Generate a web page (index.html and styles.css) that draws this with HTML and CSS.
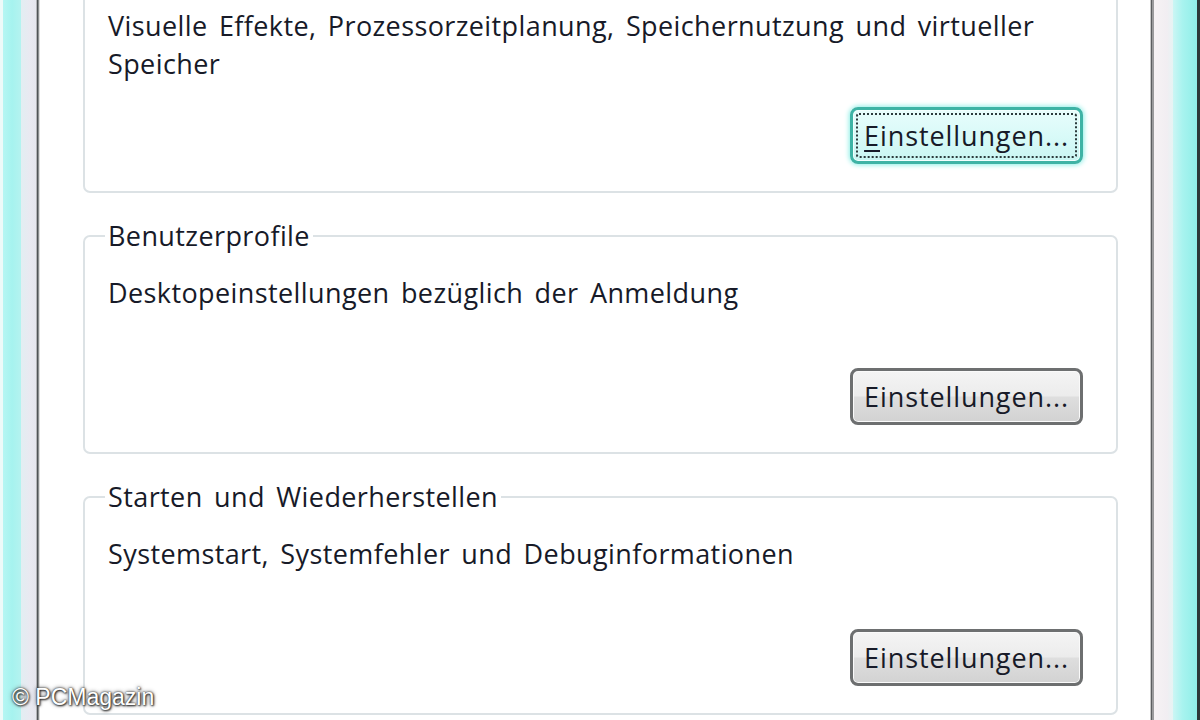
FILE: index.html
```html
<!DOCTYPE html>
<html lang="de">
<head>
<meta charset="utf-8">
<title>Systemeigenschaften – Erweitert</title>
<link rel="stylesheet" href="styles.css">
</head>
<body>
<div class="screen">
  <div class="frame frame-left">
    <span class="edge"></span>
    <span class="glass"></span>
    <span class="pale"></span>
    <span class="line"></span>
  </div>

  <main class="panel">
    <fieldset class="group group-first">
      <p class="desc">Visuelle Effekte, Prozessorzeitplanung, Speichernutzung und virtueller Speicher</p>
      <div class="actions">
        <button class="btn is-focused" type="button"><span class="label"><u>E</u>instellungen...</span></button>
      </div>
    </fieldset>

    <fieldset class="group">
      <legend>Benutzerprofile</legend>
      <p class="desc">Desktopeinstellungen bezüglich der Anmeldung</p>
      <div class="actions">
        <button class="btn" type="button"><span class="label">Einstellungen...</span></button>
      </div>
    </fieldset>

    <fieldset class="group">
      <legend>Starten und Wiederherstellen</legend>
      <p class="desc">Systemstart, Systemfehler und Debuginformationen</p>
      <div class="actions">
        <button class="btn" type="button"><span class="label">Einstellungen...</span></button>
      </div>
    </fieldset>
  </main>

  <div class="frame frame-right">
    <span class="line"></span>
    <span class="pale"></span>
    <span class="glass"></span>
    <span class="edge"></span>
  </div>

  <div class="watermark">© PCMagazin</div>
</div>
</body>
</html>
```

FILE: styles.css
```css
html, body {
  margin: 0;
  padding: 0;
}

body {
  width: 1200px;
  height: 720px;
  overflow: hidden;
  background: #ffffff;
  font-family: "Open Sans", "Noto Sans", "Liberation Sans", sans-serif;
  color: #171a28;
}

.screen {
  position: relative;
  display: flex;
  width: 1200px;
  height: 720px;
  overflow: hidden;
  background: #ffffff;
}

/* window frame strips */
.frame {
  display: flex;
  flex: none;
  height: 100%;
}

.frame-left {
  width: 40px;
}

.frame-left .edge {
  width: 3px;
  background: #eefaf9;
}

.frame-left .glass {
  width: 18px;
  background: linear-gradient(90deg, #b6f6f3 0%, #a6f3ef 50%, #b4f3f0 100%);
}

.frame-left .pale {
  width: 15px;
  background: linear-gradient(90deg, #e2eef2 0%, #e9e9f1 60%, #e6e6ee 100%);
}

.frame-left .line {
  width: 4px;
  background: linear-gradient(90deg, #b4b4b8 0 25%, #505456 25% 55%, #8c8e90 55% 80%, #dedede 80%);
}

.frame-right {
  width: 50px;
}

.frame-right .line {
  width: 4px;
  background: linear-gradient(90deg, #c8c8c8 0 25%, #5c5e60 25% 60%, #9a9a9c 60%);
}

.frame-right .pale {
  width: 19px;
  background: linear-gradient(90deg, #f6f2f4 0%, #f1eef2 70%, #e6f4f4 100%);
}

.frame-right .glass {
  width: 24px;
  background: linear-gradient(90deg, #cbf6f4 0%, #a8f3ef 40%, #8feee8 100%);
}

.frame-right .edge {
  width: 3px;
  background: #2c3838;
}

/* dialog content */
.panel {
  flex: 1;
  min-width: 0;
  display: flex;
  flex-direction: column;
  background: #ffffff;
}

.group {
  margin: 28px 32px 0 43px;
  padding: 23px 33px 27px 23px;
  border: 2px solid #dce2e5;
  border-radius: 7px;
  min-width: 0;
}

.group-first {
  margin-top: -18px;
}

.group legend {
  padding: 0 3px;
  margin-left: -3px;
  font-size: 27px;
  line-height: 30px;
  letter-spacing: 0.4px;
  word-spacing: 4px;
  color: #171a28;
}

.desc {
  margin: 0;
  min-height: 76px;
  font-size: 27px;
  line-height: 38px;
  letter-spacing: 0.4px;
  word-spacing: 4px;
  color: #171a28;
}

.actions {
  display: flex;
  justify-content: flex-end;
  margin-top: 18px;
}

.group-first .actions {
  margin-top: 24px;
}

.btn {
  display: flex;
  box-sizing: border-box;
  width: 233px;
  height: 57px;
  padding: 3px;
  border: 3px solid #6d6f70;
  border-radius: 8px;
  background: linear-gradient(180deg, #f4f4f4 0%, #ececec 48%, #dedede 52%, #d2d2d2 100%);
  box-shadow: inset 0 0 0 1px #fafafa;
  font-family: inherit;
  font-size: 27px;
  letter-spacing: 0.9px;
  color: #171a28;
  cursor: default;
}

.btn .label {
  flex: 1;
  display: flex;
  align-items: center;
  justify-content: center;
  border: 2px dotted transparent;
  border-radius: 3px;
  line-height: 1;
}

.btn u {
  text-decoration-thickness: 2px;
  text-underline-offset: 4px;
}

.btn.is-focused {
  border-color: #3eb3a5;
  background: linear-gradient(180deg, #e8fdfc 0%, #d9faf8 50%, #c9f6f3 100%);
  box-shadow: 0 0 5px 1px #8ceee6, inset 0 0 0 1px #f2fffe;
}

.btn.is-focused .label {
  border-color: #2c3a3c;
}

/* overlay watermark */
.watermark {
  position: absolute;
  left: 12px;
  bottom: 10px;
  font-family: "Liberation Sans", Arial, sans-serif;
  font-size: 23px;
  line-height: 26px;
  color: #ffffff;
  text-shadow: 0 0 2px #222, 1px 1px 2px #333, 0 0 4px #555;
}
```
